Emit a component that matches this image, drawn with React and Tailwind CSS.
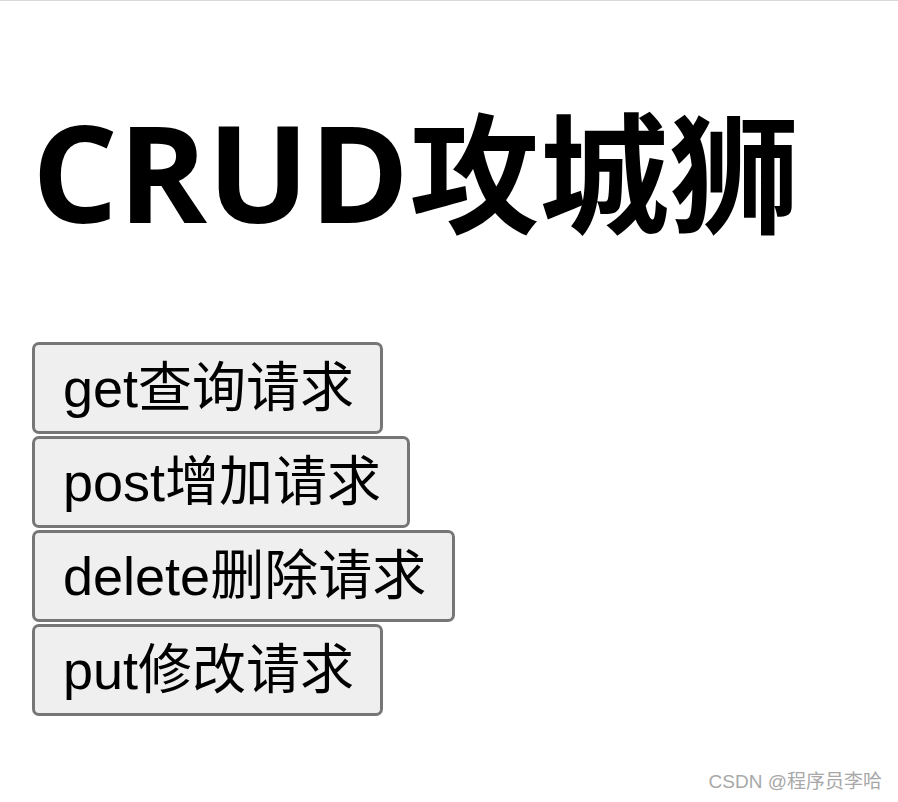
export default function App() {
  const buttons = ["get查询请求", "post增加请求", "delete删除请求", "put修改请求"];

  return (
    <div className="relative h-[802px] w-[898px] overflow-hidden border-t border-[#d9d9d9] bg-white">

      <h1 className="flex items-baseline pl-[32px] pt-[100px] font-bold leading-none text-black">
        <span className="text-[135px] font-['Open_Sans',sans-serif]">CRUD</span>
        <span className="text-[130px] font-['Noto_Sans_CJK_SC',sans-serif]">攻城狮</span>
      </h1>

      <div className="mt-[103px] flex flex-col items-start gap-[2px] pl-[32px]">
        {buttons.map((b) => (
          <button
            key={b}
            className="rounded-[7px] border-[3px] border-[#767676] bg-[#efefef] pl-[28px] pr-[26px] py-[12px] text-[54px] leading-[62px] text-black font-['Liberation_Sans','Noto_Sans_CJK_SC',sans-serif]"
          >
            {b}
          </button>
        ))}
      </div>

      <div className="absolute bottom-[6px] right-[16px] text-[19px] text-[#a8a8a8] font-['Liberation_Sans','Noto_Sans_CJK_SC',sans-serif]">
        CSDN @程序员李哈
      </div>
    </div>
  );
}
